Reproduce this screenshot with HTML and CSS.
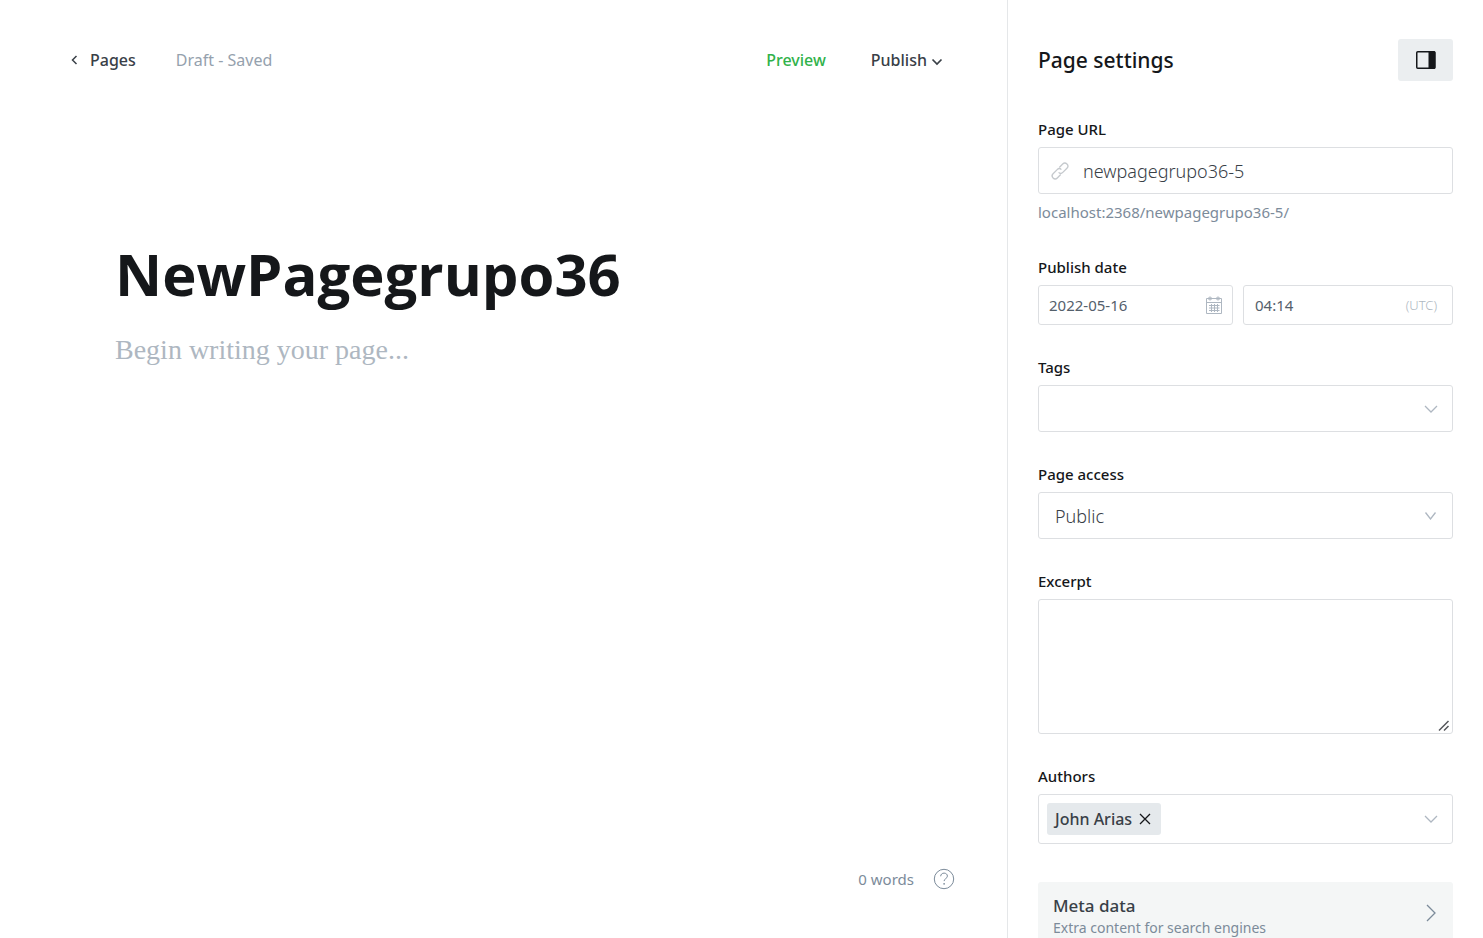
FILE: index.html
```html
<!DOCTYPE html>
<html lang="en">
<head>
<meta charset="utf-8">
<title>NewPagegrupo36</title>
<link rel="stylesheet" href="styles.css">
</head>
<body>
<div class="layout">
  <main class="editor">
    <header class="toolbar">
      <a class="back" href="#">
        <svg class="back-icon" viewBox="0 0 8 10" aria-hidden="true"><path d="M6.500 1 2.500 5l4 4"/></svg>
        Pages
      </a>
      <span class="status">Draft - Saved</span>
      <div class="actions">
        <button class="preview" type="button">Preview</button>
        <button class="publish" type="button">Publish
          <svg class="publish-icon" viewBox="0 0 12 8" aria-hidden="true"><path d="m1.500 1.500 4.500 4.500 4.500-4.500"/></svg>
        </button>
      </div>
    </header>
    <section class="canvas">
      <input class="title" type="text" aria-label="Page title" value="NewPagegrupo36">
      <textarea class="content" aria-label="Page content" placeholder="Begin writing your page..."></textarea>
    </section>
    <footer class="footer">
      <span>0 words</span>
      <a class="help" href="#" aria-label="Help">
        <svg viewBox="0 0 22 22" aria-hidden="true"><circle cx="11" cy="11" r="9.700"/><path d="M7.700 8.300c0-2 1.500-3.200 3.400-3.200 1.800 0 3.300 1.200 3.300 3 0 2.500-3.300 2.500-3.300 5"/><circle class="dot" cx="11.100" cy="15.800" r=".9"/></svg>
      </a>
    </footer>
  </main>
  <aside class="settings">
    <header class="settings-head">
      <h1>Page settings</h1>
      <button class="toggle" type="button" aria-label="Toggle settings">
        <svg viewBox="0 0 20 18" aria-hidden="true"><rect class="frame" x=".75" y=".75" width="18" height="16.500" rx="1"/><path class="panel" d="M12.500 0H18a1.500 1.500 0 0 1 1.500 1.500v15A1.500 1.500 0 0 1 18 18h-5.500z"/></svg>
      </button>
    </header>
    <form class="fields">
      <div class="field">
        <label for="url">Page URL</label>
        <div class="box url-box">
          <svg class="link-icon" viewBox="0 0 18 18" aria-hidden="true"><g transform="rotate(-45 9 9)"><path d="M7 12H2.200a3 3 0 0 1 0-6H8a3 3 0 0 1 3 3"/><path d="M11 6h4.800a3 3 0 0 1 0 6H10a3 3 0 0 1-3-3"/></g></svg>
          <input id="url" class="large" type="text" value="newpagegrupo36-5">
        </div>
        <p class="hint">localhost:2368/newpagegrupo36-5/</p>
      </div>
      <div class="field">
        <label for="date">Publish date</label>
        <div class="date-row">
          <div class="box small-box date-box">
            <input id="date" type="text" value="2022-05-16">
            <svg class="calendar-icon" viewBox="0 0 18 18" aria-hidden="true"><path d="M1.500 2.500h15v15h-15zM1.500 6.500h15M4 9.500h10.500M4 12h10.500M4 14.500h10.500M6.500 8v8M9.500 8v8M12.500 8v8"/><circle cx="5" cy="2.500" r="1.500"/><circle cx="13" cy="2.500" r="1.500"/></svg>
          </div>
          <div class="box small-box time-box">
            <input type="text" aria-label="Publish time" value="04:14">
            <span class="zone">(UTC)</span>
          </div>
        </div>
      </div>
      <div class="field">
        <label for="tags">Tags</label>
        <div class="box">
          <input id="tags" type="text">
          <svg class="chevron" viewBox="0 0 14 8" aria-hidden="true"><path d="m1 1 6 6 6-6"/></svg>
        </div>
      </div>
      <div class="field">
        <label for="access">Page access</label>
        <div class="box">
          <select id="access" class="large"><option>Public</option></select>
          <svg class="chevron" viewBox="0 0 14 8" aria-hidden="true"><path d="m1.500.500 5 6.500 5-6.500"/></svg>
        </div>
      </div>
      <div class="field">
        <label for="excerpt">Excerpt</label>
        <div class="excerpt-box">
          <textarea id="excerpt" class="excerpt"></textarea>
          <svg class="grip" viewBox="0 0 12 12" aria-hidden="true"><path d="M1 10.500 10.500 1M6 10.500 10.500 6"/></svg>
        </div>
      </div>
      <div class="field">
        <label for="authors">Authors</label>
        <div class="box authors-box">
          <span class="chip">John Arias
            <button type="button" aria-label="Remove John Arias"><svg viewBox="0 0 12 12" aria-hidden="true"><path d="m1 1 10 10M11 1 1 11"/></svg></button>
          </span>
          <input id="authors" type="text">
          <svg class="chevron" viewBox="0 0 14 8" aria-hidden="true"><path d="m1 1 6 6 6-6"/></svg>
        </div>
      </div>
      <button class="meta" type="button">
        <span class="meta-text"><span class="meta-title">Meta data</span><span class="meta-note">Extra content for search engines</span></span>
        <svg viewBox="0 0 10 18" aria-hidden="true"><path d="m1 1 8 8-8 8"/></svg>
      </button>
    </form>
  </aside>
</div>
</body>
</html>
```

FILE: styles.css
```css
* {
  box-sizing: border-box;
}

body {
  margin: 0;
  background: #fff;
  color: #15171a;
  font-family: "Noto Sans", "Open Sans", sans-serif;
  font-size: 15px;
}

button,
input,
select,
textarea {
  margin: 0;
  padding: 0;
  border: 0;
  border-radius: 0;
  outline: 0;
  background: none;
  color: inherit;
  font: inherit;
}

svg {
  flex: none;
  fill: none;
  stroke: currentColor;
}

a {
  color: inherit;
  text-decoration: none;
}

.layout {
  display: grid;
  grid-template-columns: minmax(0, 1fr) 476px;
  height: 100vh;
  overflow: hidden;
}

.editor {
  display: flex;
  flex-direction: column;
  min-width: 0;
}

.toolbar {
  display: flex;
  align-items: center;
  padding: 48px 64px 0 70px;
  font-size: 16px;
  line-height: 24px;
}

.back {
  display: flex;
  align-items: center;
  gap: 12px;
  color: #394047;
  font-weight: 500;
}

.back-icon {
  width: 8px;
  height: 10px;
  stroke-width: 1.5;
}

.status {
  margin-left: 40px;
  color: #95a1ad;
}

.actions {
  display: flex;
  gap: 45px;
  margin-left: auto;
  font-weight: 500;
}

.preview {
  color: #30b24a;
}

.publish {
  display: flex;
  align-items: center;
  gap: 4px;
  color: #394047;
}

.publish-icon {
  width: 12px;
  height: 8px;
  margin-top: 4px;
  stroke-width: 1.7;
}

.canvas {
  display: flex;
  flex: 1;
  flex-direction: column;
  gap: 20px;
  padding: 162px 116px 0 115px;
}

.title {
  width: 100%;
  height: 78px;
  font-family: "Open Sans", "Noto Sans", sans-serif;
  font-size: 58px;
  font-weight: 700;
}

.content {
  flex: 1;
  width: 100%;
  resize: none;
  font-family: "Liberation Serif", serif;
  font-size: 28px;
  line-height: 36px;
}

.content::placeholder {
  color: #aeb7c1;
}

.footer {
  display: flex;
  align-items: center;
  justify-content: flex-end;
  gap: 19px;
  padding: 0 52px 48px;
  color: #7c8b9a;
  line-height: 22px;
}

.help,
.help svg {
  display: block;
  width: 22px;
  height: 22px;
}

.dot {
  fill: currentColor;
  stroke: none;
}

.settings {
  padding: 39px 30px 0;
  border-left: 1px solid #e5e7e9;
  overflow: hidden;
}

.settings-head {
  display: flex;
  align-items: center;
  justify-content: space-between;
  margin-bottom: 38px;
}

h1 {
  margin: 0;
  font-size: 21px;
  font-weight: 500;
}

.toggle {
  display: grid;
  place-items: center;
  width: 55px;
  height: 42px;
  border-radius: 3px;
  background: #ebeef0;
}

.toggle svg {
  width: 20px;
  height: 18px;
}

.frame {
  stroke-width: 1.5;
}

.panel {
  fill: currentColor;
  stroke: none;
}

.fields {
  display: flex;
  flex-direction: column;
  gap: 32px;
}

.field {
  display: flex;
  flex-direction: column;
}

label {
  margin-bottom: 8px;
  font-size: 15px;
  font-weight: 500;
  line-height: 20px;
}

.box {
  display: flex;
  align-items: center;
  height: 47px;
  padding: 0 14px 0 16px;
  border: 1px solid #dddfe2;
  border-radius: 3px;
  color: #394047;
}

.box input,
.box select {
  flex: 1;
  min-width: 0;
  height: 100%;
  appearance: none;
}

.box .large {
  font-size: 18px;
  font-weight: 300;
}

.url-box {
  gap: 14px;
  padding-left: 12px;
}

.link-icon {
  width: 18px;
  height: 18px;
  color: #c5c9cd;
  stroke-width: 1.3;
}

.hint {
  margin: 6px 0 0;
  color: #7c8b9a;
  line-height: 25px;
}

.date-row {
  display: grid;
  grid-template-columns: minmax(0, 195fr) minmax(0, 210fr);
  gap: 10px;
}

.small-box {
  height: 40px;
  padding: 0 15px 0 11px;
  color: #54606b;
}

.date-box {
  padding: 0 9px 0 10px;
}

.calendar-icon {
  width: 18px;
  height: 18px;
  color: #aeb7c1;
}

.zone {
  color: #aeb7c1;
  font-size: 13px;
  font-weight: 300;
}

.chevron {
  width: 14px;
  height: 8px;
  color: #aeb7c1;
  stroke-width: 1.3;
}

.excerpt-box {
  position: relative;
  display: flex;
}

.excerpt {
  flex: 1;
  height: 135px;
  border: 1px solid #dddfe2;
  border-radius: 3px;
  resize: none;
}

.grip {
  position: absolute;
  right: 3px;
  bottom: 2px;
  width: 12px;
  height: 12px;
  color: #54565a;
  stroke-width: 1.5;
}

.authors-box {
  height: 50px;
  padding-left: 8px;
}

.chip {
  display: flex;
  align-items: center;
  gap: 7px;
  height: 32px;
  padding: 0 10px 0 8px;
  border-radius: 3px;
  background: #e5e9ec;
  font-size: 16px;
  font-weight: 500;
}

.chip button,
.chip svg {
  display: block;
  width: 12px;
  height: 12px;
  color: #15171a;
}

.chip svg {
  stroke-width: 1.3;
}

.meta {
  display: flex;
  align-items: center;
  justify-content: space-between;
  margin-top: 6px;
  padding: 12px 17px 12px 15px;
  border-radius: 3px;
  background: #f4f6f6;
  text-align: left;
}

.meta svg {
  width: 10px;
  height: 18px;
  margin-bottom: 6px;
  color: #7c8b9a;
  stroke-width: 1.3;
}

.meta-text {
  display: flex;
  flex-direction: column;
}

.meta-title {
  color: #394047;
  font-size: 17px;
  font-weight: 500;
  line-height: 23px;
}

.meta-note {
  color: #7c8b9a;
  font-size: 14px;
  line-height: 21px;
}
```
